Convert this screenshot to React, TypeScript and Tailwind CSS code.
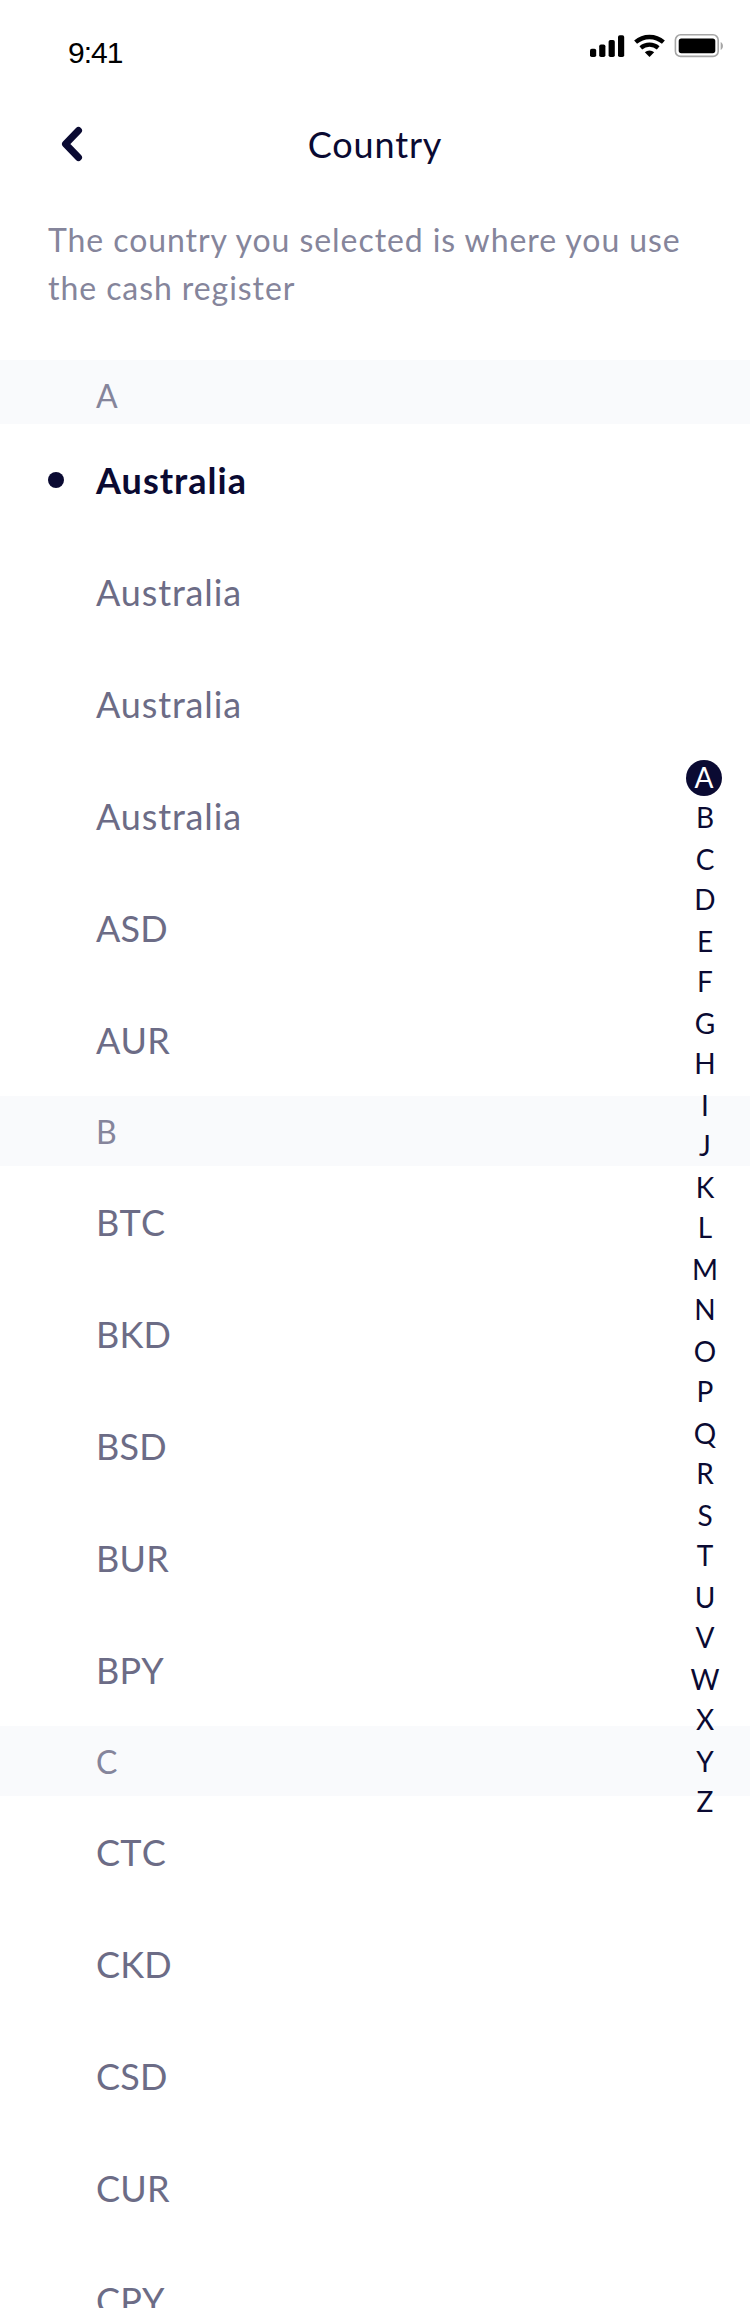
const sections = [
  { letter: 'A', items: ['Australia', 'Australia', 'Australia', 'Australia', 'ASD', 'AUR'] },
  { letter: 'B', items: ['BTC', 'BKD', 'BSD', 'BUR', 'BPY'] },
  { letter: 'C', items: ['CTC', 'CKD', 'CSD', 'CUR', 'CPY'] },
];

const alphabet = 'ABCDEFGHIJKLMNOPQRSTUVWXYZ'.split('');

function StatusBar() {
  return (
    <div className="flex h-[96px] items-start justify-between pl-[68px] pr-[26px] text-black">
      <span className="mt-[34px] font-['Liberation_Sans',sans-serif] text-[30px] leading-[38px] tracking-[-1px]">9:41</span>
      <svg className="mt-[28px]" width="134" height="36" viewBox="590 28 134 36">
        <rect x="590" y="48.8" width="6.2" height="8.2" rx="1.8" />
        <rect x="599.2" y="44.5" width="6.2" height="12.5" rx="1.8" />
        <rect x="608.6" y="40" width="6.2" height="17" rx="1.8" />
        <rect x="618" y="35.2" width="6.2" height="21.8" rx="1.8" />
        <path d="M635.600 42.200a21 21 0 0 1 27.800 0" fill="none" stroke="#000" strokeWidth="4.4" />
        <path d="M640.800 47.800a13.500 13.500 0 0 1 17.400 0" fill="none" stroke="#000" strokeWidth="4.2" />
        <path d="M649.5 57l-4.700-4.700a7 7 0 0 1 9.400 0z" />
        <rect x="675.4" y="34.8" width="42.8" height="21.6" rx="5.2" fill="none" stroke="#a6a6a6" strokeWidth="1.6" />
        <rect x="678.7" y="38.4" width="36.6" height="14.8" rx="2.6" />
        <path d="M720.700 42v8c3-1.400 3-6.600 0-8z" fill="#a6a6a6" />
      </svg>
    </div>
  );
}

function Header() {
  return (
    <header className="grid h-[96px] grid-cols-[1fr_auto_1fr] items-center px-[60px]">
      <svg width="24" height="36" viewBox="60 126 24 36" fill="none" stroke="#0a0a32" strokeWidth="7" strokeLinecap="round" strokeLinejoin="round">
        <path d="M78.500 130.500L65.500 144L78.500 157.500" />
      </svg>
      <h1 className="text-[36px] leading-[96px] tracking-[0.85px] text-[#0a0a32]">Country</h1>
    </header>
  );
}

function IndexRail() {
  return (
    <nav className="absolute left-[684px] top-[757px] flex w-[40px] flex-col text-center text-[28px] leading-[40px] text-[#0a0a32]">
      {alphabet.map((letter, i) =>
        i === 0 ? (
          <div key={letter} className="flex h-[40px] justify-center pt-[3px]">
            <span className="h-[36px] w-[36px] rounded-full bg-[#0a0a32] leading-[34px] text-white">{letter}</span>
          </div>
        ) : (
          <div key={letter} className={i % 2 ? 'h-[42px] pl-[2px]' : 'h-[40px] pl-[2px]'}>{letter}</div>
        ),
      )}
    </nav>
  );
}

export default function App() {
  return (
    <div className="relative h-[2308px] w-[750px] overflow-hidden bg-white font-[Lato,sans-serif]">
      <StatusBar />
      <Header />
      <p className="h-[168px] whitespace-nowrap pl-[48px] pt-[24px] text-[32px] leading-[48px] tracking-[0.93px] text-[#85859b]">
        The country you selected is where you use
        <br />
        the cash register
      </p>
      {sections.map((section, s) => (
        <section key={section.letter}>
          <h2 className={`${s === 0 ? 'h-[64px]' : 'h-[70px]'} bg-[#f9fafc] pl-[96px] text-[32px] leading-[71px] text-[#85859b]`}>
            {section.letter}
          </h2>
          <ul className="text-[36px] leading-[112px] text-[#6c6c86]">
            {section.items.map((item, i) =>
              s === 0 && i === 0 ? (
                <li key={i} className="flex h-[112px] gap-[32px] pl-[48px] font-bold tracking-[1px] text-[#0a0a32]">
                  <span className="mt-[48px] h-[16px] w-[16px] rounded-full bg-[#0a0a32]" />
                  {item}
                </li>
              ) : (
                <li
                  key={i}
                  className={`h-[112px] pl-[96px] ${item.length > 3 ? 'tracking-[0.85px]' : 'tracking-[0.2px] [font-kerning:none]'}`}
                >
                  {item}
                </li>
              ),
            )}
          </ul>
        </section>
      ))}
      <IndexRail />
    </div>
  );
}
